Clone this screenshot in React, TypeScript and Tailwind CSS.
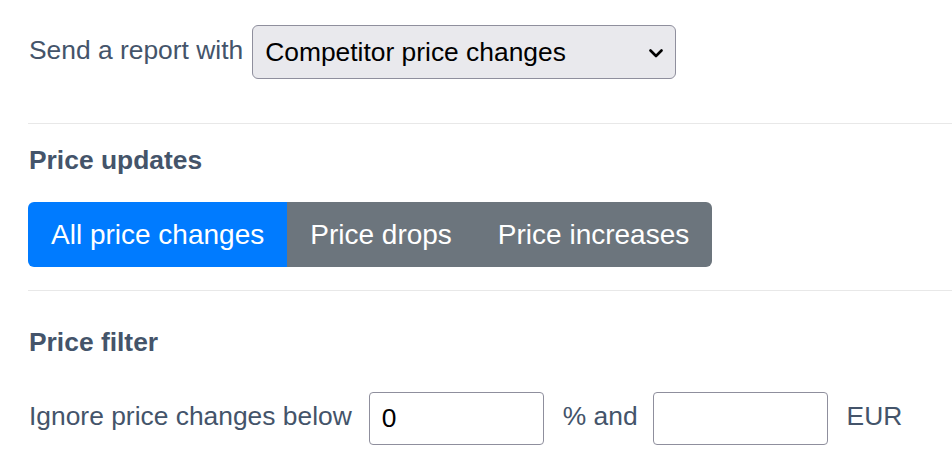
import { useState } from "react";

const modes = ["All price changes", "Price drops", "Price increases"];

const ChevronDown = () => (
  <svg width="14" height="9" viewBox="0 0 14 9" fill="none" className="pointer-events-none absolute right-[13px] top-[24px]">
    <path d="M1.5 1.5 L7 7 L12.5 1.5" stroke="#000" strokeWidth="2.6" strokeLinecap="round" strokeLinejoin="round" />
  </svg>
);

export default function App() {
  const [mode, setMode] = useState(0);

  return (
    <div className="min-h-screen bg-white pl-[28px] pt-[25px] font-['Liberation_Sans',Arial,sans-serif] text-[26.4px] leading-[30px] text-[#44546a]">
      {/* report type */}
      <div className="flex items-start">
        <label className="ml-[1px] mt-[10px]">Send a report with</label>
        <div className="relative ml-[9px]">
          <select
            defaultValue="competitor"
            className="h-[54px] w-[424px] appearance-none rounded-[6px] border border-[#8f8f9d] bg-[#e9e9ed] pl-[12px] text-[26.4px] text-black outline-none"
          >
            <option value="competitor">Competitor price changes</option>
            <option value="own">Own price changes</option>
          </select>
          <ChevronDown />
        </div>
      </div>

      <div className="mt-[44px] h-px bg-[#e8e8e8]" />

      {/* price updates */}
      <h3 className="ml-[1px] mt-[21px] font-bold">Price updates</h3>
      <div className="mt-[27px] flex w-fit overflow-hidden rounded-[6px]">
        {modes.map((m, i) => (
          <button
            key={m}
            onClick={() => setMode(i)}
            className={
              "h-[65px] px-[23px] text-[28px] text-white " +
              (mode === i ? "bg-[#007bff]" : "bg-[#6c757d]")
            }
          >
            {m}
          </button>
        ))}
      </div>

      <div className="mt-[23px] h-px bg-[#e8e8e8]" />

      {/* price filter */}
      <h3 className="ml-[1px] mt-[36px] font-bold">Price filter</h3>
      <div className="mt-[35px] flex items-start">
        <span className="ml-[1px] mt-[9px]">Ignore price changes below</span>
        <input
          defaultValue="0"
          className="ml-[17px] h-[53px] w-[175px] rounded-[4px] border border-[#8f8f9d] bg-white pl-[12px] text-[26.4px] text-black outline-none"
        />
        <span className="ml-[19px] mt-[9px]">% and</span>
        <input
          className="ml-[15px] h-[53px] w-[175px] rounded-[4px] border border-[#8f8f9d] bg-white pl-[12px] text-[26.4px] text-black outline-none"
        />
        <span className="ml-[19px] mt-[9px]">EUR</span>
      </div>
    </div>
  );
}
